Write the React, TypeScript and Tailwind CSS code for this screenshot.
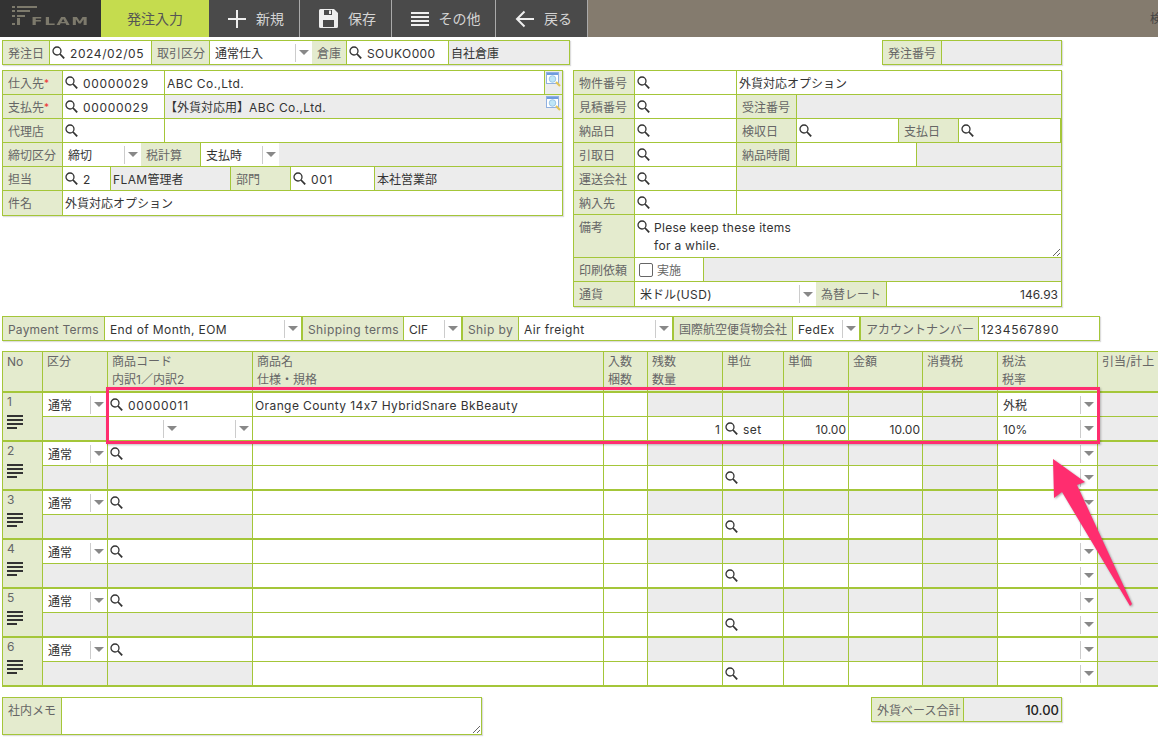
import type { ReactNode } from 'react'

const ROW_COLS = 'grid grid-cols-[40px_65px_145px_351px_44px_75px_61px_65px_74px_75px_100px_1fr]'

function SearchIcon() {
  return (
    <svg width="13" height="13" viewBox="0 0 13 13" fill="none" stroke="#333" className="shrink-0">
      <circle cx="5" cy="5" r="4" strokeWidth="1.3" />
      <path d="M8 8l4.2 4.4" strokeWidth="1.8" />
    </svg>
  )
}

// latin text sits a little wider in the reference than Inter does by default
function Lat({ children, wide }: { children: ReactNode; wide?: boolean }) {
  return <span className={wide ? 'tracking-[0.7px]' : 'tracking-[0.4px]'}>{children}</span>
}

function Lbl({ w, children, top }: { w: string; children: ReactNode; top?: boolean }) {
  return (
    <div className={`${w} shrink-0 h-full bg-[#e4ebce] border-r border-[#a4c639] pl-[5px] text-[#666] whitespace-nowrap flex ${top ? 'items-start pt-[4px]' : 'items-center pt-[2px]'}`}>
      {children}
    </div>
  )
}

function Find({ w, children }: { w: string; children?: ReactNode }) {
  return (
    <div className={`${w} h-full bg-white border-r border-[#a4c639] pl-[2px] flex items-center gap-[5px] whitespace-nowrap text-[#333]`}>
      <SearchIcon />
      <span className="pt-[2px]">{children}</span>
    </div>
  )
}

function Val({ w, gray, children }: { w: string; gray?: boolean; children?: ReactNode }) {
  return (
    <div className={`${w} h-full ${gray ? 'bg-[#ececec]' : 'bg-white'} pl-[2px] pt-[2px] border-r border-[#a4c639] flex items-center whitespace-nowrap text-[#333]`}>
      {children}
    </div>
  )
}

function Sel({ w, children, edge = 'border-r-0' }: { w: string; children?: ReactNode; edge?: string }) {
  return (
    <div className={`${w} h-full bg-white ${edge} border-[#a4c639] flex items-center pl-[5px] whitespace-nowrap text-[#333]`}>
      <span className="flex-1 overflow-hidden pt-[2px]">{children}</span>
      <span className="h-[18px] w-[1px] bg-[#ccc] mr-[3px] shrink-0" />
      <span className="w-0 h-0 mr-[3px] shrink-0 border-l-[5px] border-r-[5px] border-t-[5px] border-l-transparent border-r-transparent border-t-[#888]" />
    </div>
  )
}

function Row({ children, className = 'h-6' }: { children: ReactNode; className?: string }) {
  return <div className={`${className} flex border-b border-[#a4c639] last:border-b-0`}>{children}</div>
}

function BlueLens() {
  return (
    <svg width="16" height="15" viewBox="0 0 16 15" className="shrink-0 ml-[1px]">
      <rect x="0.5" y="0.5" width="12" height="11" fill="#fff" stroke="#8fb0e0" />
      <rect x="1" y="1" width="11" height="2" fill="#6f9bde" />
      <circle cx="6.5" cy="7" r="3.3" fill="#bfe6f6" stroke="#9cc6e6" />
      <path d="M10 10l4 4" stroke="#e2c455" strokeWidth="2.2" />
    </svg>
  )
}

function NavBtn({ w, icon, label }: { w: string; icon: ReactNode; label: string }) {
  return (
    <div className={`${w} h-full bg-[#4a4a4a] border-r border-[#aaa] pl-[4px] flex items-center justify-center gap-[10px] text-[#d4d4d4] text-[14px]`}>
      {icon}
      <span>{label}</span>
    </div>
  )
}

function Header() {
  return (
    <div className="h-[37px] flex bg-[#847b6e] overflow-hidden">
      <div className="w-[101px] h-full bg-[#333] relative shrink-0">
        <svg width="40" height="28" viewBox="0 0 40 28" className="absolute left-0 top-0" fill="#7d7a6c">
          <rect x="12" y="6" width="3" height="2" />
          <rect x="12" y="10" width="3" height="2" />
          <rect x="12" y="15" width="3" height="2" />
          <rect x="12" y="23" width="3" height="2" />
          <rect x="17" y="6" width="20" height="2" />
          <rect x="17" y="10" width="13" height="2" />
          <rect x="17" y="15" width="8" height="2" />
          <rect x="17" y="18" width="3" height="7" />
        </svg>
        <span className="absolute left-[31px] top-[15px] origin-left scale-x-[1.55] font-['DejaVu_Sans',sans-serif] text-[11px] leading-[14px] font-bold tracking-[1px] text-[#7d7a6c]">FLAM</span>
      </div>
      <div className="w-[108px] h-full bg-[#c5dc4e] flex items-center justify-center text-[14px] text-[#555] shrink-0">発注入力</div>
      <NavBtn
        w="w-[91px]"
        label="新規"
        icon={
          <svg width="18" height="18" viewBox="0 0 18 18" stroke="#eee" strokeWidth="2">
            <path d="M9 0v18M0 9h18" />
          </svg>
        }
      />
      <NavBtn
        w="w-[92px]"
        label="保存"
        icon={
          <svg width="19" height="19" viewBox="0 0 19 19">
            <path fillRule="evenodd" fill="#eee" d="M1.5 0H15l4 4v13.5a1.5 1.5 0 0 1-1.500 1.500H1.500A1.500 1.500 0 0 1 0 17.500V1.500A1.500 1.500 0 0 1 1.500 0zM5 1v5h8V1zM4 11v7h11v-7z" />
            <rect x="10" y="1.500" width="2" height="3.500" fill="#eee" />
          </svg>
        }
      />
      <NavBtn
        w="w-[104px]"
        label="その他"
        icon={
          <svg width="18" height="16" viewBox="0 0 18 16" fill="#eee">
            <rect y="1" width="18" height="2" />
            <rect y="5" width="18" height="2" />
            <rect y="9" width="18" height="2" />
            <rect y="13" width="18" height="2" />
          </svg>
        }
      />
      <NavBtn
        w="w-[92px]"
        label="戻る"
        icon={
          <svg width="19" height="18" viewBox="0 0 19 18" fill="none" stroke="#eee" strokeWidth="2">
            <path d="M19 9H2M9.500 1.500L2 9l7.500 7.500" />
          </svg>
        }
      />
      <div className="flex-1 pl-[562px] whitespace-nowrap text-[12px] text-[#444] flex items-center overflow-hidden">検索</div>
    </div>
  )
}

function Box({ className, children }: { className: string; children: ReactNode }) {
  return <div className={`${className} border border-[#a4c639] shadow-[1px_1px_1px_#ddd]`}>{children}</div>
}

function LeftForm() {
  return (
    <div className="w-[571px] shrink-0">
      <Box className="w-[568px] h-[25px] flex">
        <Lbl w="w-[47px]">発注日</Lbl>
        <Find w="w-[102px]"><span className="tracking-[0.6px]">2024/02/05</span></Find>
        <Lbl w="w-[58px]">取引区分</Lbl>
        <Sel w="w-[102px]">通常仕入</Sel>
        <Lbl w="w-[35px]">倉庫</Lbl>
        <Find w="w-[102px]"><Lat>SOUKO000</Lat></Find>
        <div className="flex-1 bg-[#ececec] flex items-center pl-[2px] pt-[2px] text-[#333]">自社倉庫</div>
      </Box>
      <Box className="w-[561px] mt-[5px]">
        <Row>
          <Lbl w="w-[60px]">仕入先<span className="text-[#e33] text-[10px] self-start mt-[3px]">*</span></Lbl>
          <Find w="w-[102px]"><Lat wide>00000029</Lat></Find>
          <Val w="flex-1"><Lat>ABC Co.,Ltd.</Lat></Val>
          <div className="w-[17px] h-full bg-[#ececec] pt-[1px]"><BlueLens /></div>
        </Row>
        <Row>
          <Lbl w="w-[60px]">支払先<span className="text-[#e33] text-[10px] self-start mt-[3px]">*</span></Lbl>
          <Find w="w-[102px]"><Lat wide>00000029</Lat></Find>
          <div className="flex-1 h-full bg-[#ececec] flex items-center pt-[2px] text-[#333] whitespace-nowrap">【外貨対応用】<Lat>ABC Co.,Ltd.</Lat></div>
          <div className="w-[17px] h-full bg-[#ececec] pt-[1px]"><BlueLens /></div>
        </Row>
        <Row>
          <Lbl w="w-[60px]">代理店</Lbl>
          <Find w="w-[102px]" />
          <Val w="flex-1 border-r-0" />
        </Row>
        <Row>
          <Lbl w="w-[60px]">締切区分</Lbl>
          <Sel w="w-[78px]">締切</Sel>
          <Lbl w="w-[60px]">税計算</Lbl>
          <Sel w="w-[78px]">支払時</Sel>
          <div className="flex-1 h-full bg-[#ececec]" />
        </Row>
        <Row>
          <Lbl w="w-[60px]">担当</Lbl>
          <Find w="w-[48px]">2</Find>
          <Val w="w-[120px]" gray><Lat>FLAM</Lat>管理者</Val>
          <Lbl w="w-[60px]">部門</Lbl>
          <Find w="w-[84px]"><Lat wide>001</Lat></Find>
          <div className="flex-1 h-full bg-[#ececec] flex items-center pl-[2px] pt-[2px] text-[#333]">本社営業部</div>
        </Row>
        <Row>
          <Lbl w="w-[60px]">件名</Lbl>
          <div className="flex-1 h-full bg-white flex items-center pl-[2px] pt-[2px] text-[#333]">外貨対応オプション</div>
        </Row>
      </Box>
    </div>
  )
}

function RightForm() {
  return (
    <div className="w-[489px] shrink-0">
      <div className="flex justify-end">
        <Box className="w-[180px] h-[25px] flex">
          <Lbl w="w-[59px]">発注番号</Lbl>
          <div className="flex-1 bg-[#ececec]" />
        </Box>
      </div>
      <Box className="mt-[5px]">
        <Row>
          <Lbl w="w-[61px]">物件番号</Lbl>
          <Find w="w-[102px]" />
          <div className="flex-1 h-full bg-white flex items-center pl-[2px] pt-[2px] text-[#333]">外貨対応オプション</div>
        </Row>
        <Row>
          <Lbl w="w-[61px]">見積番号</Lbl>
          <Find w="w-[102px]" />
          <Lbl w="w-[60px]">受注番号</Lbl>
          <div className="flex-1 h-full bg-[#ececec]" />
        </Row>
        <Row>
          <Lbl w="w-[61px]">納品日</Lbl>
          <Find w="w-[102px]" />
          <Lbl w="w-[60px]">検収日</Lbl>
          <Find w="w-[102px]" />
          <Lbl w="w-[60px]">支払日</Lbl>
          <Find w="w-[102px]" />
          <div className="flex-1 h-full bg-[#ececec]" />
        </Row>
        <Row>
          <Lbl w="w-[61px]">引取日</Lbl>
          <Find w="w-[102px]" />
          <Lbl w="w-[60px]">納品時間</Lbl>
          <Val w="w-[120px]" />
          <div className="flex-1 h-full bg-[#ececec]" />
        </Row>
        <Row>
          <Lbl w="w-[61px]">運送会社</Lbl>
          <Find w="w-[102px]" />
          <div className="flex-1 h-full bg-[#ececec]" />
        </Row>
        <Row>
          <Lbl w="w-[61px]">納入先</Lbl>
          <Find w="w-[102px]" />
          <div className="flex-1 h-full bg-white" />
        </Row>
        <Row className="h-[43px]">
          <Lbl w="w-[61px]" top>備考</Lbl>
          <div className="flex-1 h-full bg-white flex items-start pl-[2px] pt-[5px] relative">
            <SearchIcon />
            <textarea
              readOnly
              className="absolute inset-0 pl-[19px] pt-[4px] text-[#333] tracking-[0.3px] leading-[18px] outline-none bg-transparent"
              defaultValue={'Plese keep these items\nfor a while.'}
            />
          </div>
        </Row>
        <Row>
          <Lbl w="w-[61px]">印刷依頼</Lbl>
          <div className="w-[69px] h-full bg-white border-r border-[#a4c639] flex items-center pl-[4px] gap-[4px] text-[#666]">
            <input type="checkbox" readOnly className="appearance-none w-[14px] h-[14px] rounded-[2px] border border-[#666] bg-white" />
            <span className="pt-[2px]">実施</span>
          </div>
          <div className="flex-1 h-full bg-[#ececec]" />
        </Row>
        <Row>
          <Lbl w="w-[61px]">通貨</Lbl>
          <Sel w="w-[181px]">米ドル<Lat>(USD)</Lat></Sel>
          <Lbl w="w-[71px]">為替レート</Lbl>
          <div className="flex-1 h-full bg-white flex items-center justify-end pr-[3px] pt-[2px] text-[#333]">146.93</div>
        </Row>
      </Box>
    </div>
  )
}

function TermsBar() {
  return (
    <Box className="w-[1098px] h-[25px] mt-[9px] flex">
      <Lbl w="w-[102px]"><span className="tracking-[0.2px]">Payment Terms</span></Lbl>
      <Sel w="w-[198px]" edge="border-r-2"><Lat>End of Month, EOM</Lat></Sel>
      <Lbl w="w-[101px]"><Lat>Shipping terms</Lat></Lbl>
      <Sel w="w-[59px]" edge="border-r-2">CIF</Sel>
      <Lbl w="w-[56px]"><Lat>Ship by</Lat></Lbl>
      <Sel w="w-[155px]" edge="border-r-2"><Lat>Air freight</Lat></Sel>
      <Lbl w="w-[119px]">国際航空便貨物会社</Lbl>
      <Sel w="w-[68px]" edge="border-r-2"><Lat>FedEx</Lat></Sel>
      <Lbl w="w-[118px]">アカウントナンバー</Lbl>
      <div className="flex-1 bg-white flex items-center pl-[2px] pt-[2px] text-[#333]"><Lat wide>1234567890</Lat></div>
    </Box>
  )
}

function Hamburger() {
  return (
    <div className="w-[16px] flex flex-col gap-[2px] mt-[4px]">
      <span className="block h-[2px] w-full bg-[#333]" />
      <span className="block h-[2px] w-full bg-[#333]" />
      <span className="block h-[2px] w-full bg-[#333]" />
      <span className="block h-[2px] w-[10px] bg-[#333]" />
    </div>
  )
}

function Td({ gray, bottom, last, right, children }: { gray?: boolean; bottom?: boolean; last?: boolean; right?: boolean; children?: ReactNode }) {
  return (
    <div className={`h-full overflow-hidden flex items-center whitespace-nowrap text-[#333] ${gray ? 'bg-[#ececec]' : 'bg-white'} ${bottom ? '' : 'border-b border-[#a4c639]'} ${last ? '' : 'border-r border-[#a4c639]'} ${right ? 'justify-end pr-[2px]' : 'pl-[2px]'}`}>
      {children}
    </div>
  )
}

function TdSel({ bottom, children }: { bottom?: boolean; children?: ReactNode }) {
  return (
    <div className={`h-full bg-white border-r border-[#a4c639] ${bottom ? '' : 'border-b'}`}>
      <Sel w="w-full">{children}</Sel>
    </div>
  )
}

function Txt({ children }: { children?: ReactNode }) {
  return <span className="pt-[2px]">{children}</span>
}

type Line = { code?: string; name?: string; qty?: string; unit?: string; price?: string; amount?: string; tax?: string; rate?: string }

function ItemRow({ no, line }: { no: number; line: Line }) {
  return (
    <div className={`${ROW_COLS} grid-rows-[24px_23px] border-b-2 border-[#a4c639]`}>
      <div className="row-span-2 bg-[#e4ebce] border-r border-[#a4c639] pl-[4px] text-[#666] leading-[18px]">
        <div>{no}</div>
        <Hamburger />
      </div>
      <TdSel>通常</TdSel>
      <Td><SearchIcon /><span className="ml-[5px] pt-[2px] tracking-[0.7px]">{line.code}</span></Td>
      <Td><span className="pt-[2px] tracking-[0.4px]">{line.name}</span></Td>
      <Td />
      <Td gray />
      <Td gray />
      <Td gray />
      <Td gray />
      <Td gray />
      <TdSel>{line.tax}</TdSel>
      <Td gray last />

      <Td gray bottom />
      {line.code ? (
        <div className="h-full bg-white border-r border-[#a4c639] flex">
          <Sel w="w-[72px]" />
          <Sel w="w-[72px]" />
        </div>
      ) : (
        <Td gray bottom />
      )}
      <Td bottom />
      <Td bottom />
      <Td bottom right><Txt>{line.qty}</Txt></Td>
      <Td bottom><SearchIcon /><span className="ml-[5px] pt-[2px] tracking-[0.4px]">{line.unit}</span></Td>
      <Td bottom right><Txt>{line.price}</Txt></Td>
      <Td bottom right><Txt>{line.amount}</Txt></Td>
      <Td gray bottom />
      <TdSel bottom>{line.rate}</TdSel>
      <Td gray bottom last />
    </div>
  )
}

const HEADS: [string, string?][] = [
  ['No'],
  ['区分'],
  ['商品コード', '内訳1／内訳2'],
  ['商品名', '仕様・規格'],
  ['入数', '梱数'],
  ['残数', '数量'],
  ['単位'],
  ['単価'],
  ['金額'],
  ['消費税'],
  ['税法', '税率'],
  ['引当/計上'],
]

const LINES: Line[] = [
  { code: '00000011', name: 'Orange County 14x7 HybridSnare BkBeauty', qty: '1', unit: 'set', price: '10.00', amount: '10.00', tax: '外税', rate: '10%' },
  {},
  {},
  {},
  {},
  {},
]

function ItemTable() {
  return (
    <div className="mt-[10px] border-t border-l border-[#a4c639]">
      <div className={`${ROW_COLS} h-[41px] border-b-2 border-[#a4c639]`}>
        {HEADS.map(([a, b], i) => (
          <div key={a} className={`bg-[#e4ebce] ${i < 11 ? 'border-r border-[#a4c639]' : ''} pl-[4px] pt-[1px] text-[#666] leading-[18px] whitespace-nowrap overflow-hidden`}>
            <div>{a}</div>
            {b && <div>{b}</div>}
          </div>
        ))}
      </div>
      {LINES.map((line, i) => (
        <ItemRow key={i} no={i + 1} line={line} />
      ))}
    </div>
  )
}

function Footer() {
  return (
    <div className="mt-[10px] flex items-start">
      <Box className="w-[480px] h-[38px] flex">
        <Lbl w="w-[59px]" top>社内メモ</Lbl>
        <textarea readOnly className="flex-1 h-full bg-white outline-none" />
      </Box>
      <Box className="w-[191px] h-[25px] ml-[389px] flex">
        <Lbl w="w-[92px]">外貨ベース合計</Lbl>
        <div className="flex-1 bg-[#ececec] flex items-center justify-end pr-[2px] pt-[2px] text-[13px] font-medium text-[#222]">10.00</div>
      </Box>
    </div>
  )
}

export default function App() {
  return (
    <div className="relative w-[1158px] h-[739px] overflow-hidden bg-white text-[12px] [font-feature-settings:'calt'_0] font-['Inter','Noto_Sans_CJK_JP',sans-serif]">
      <Header />
      <div className="pl-[2px] pt-[3px]">
        <div className="flex">
          <LeftForm />
          <RightForm />
        </div>
        <TermsBar />
        <ItemTable />
        <Footer />
      </div>

      {/* callout drawn on top of the table */}
      <div className="absolute left-[106px] top-[387px] w-[994px] h-[57px] border-[3px] border-[#ff2d6f] shadow-[1px_1px_2px_rgba(0,0,0,0.25)] pointer-events-none" />
      <svg width="1158" height="739" className="absolute left-0 top-0 pointer-events-none drop-shadow-[1px_1px_1px_rgba(0,0,0,0.35)]">
        <polygon points="1053,459 1085,482 1077,485 1132,604 1130,606 1062,492 1054,498" fill="#ff2d6f" />
      </svg>
    </div>
  )
}
